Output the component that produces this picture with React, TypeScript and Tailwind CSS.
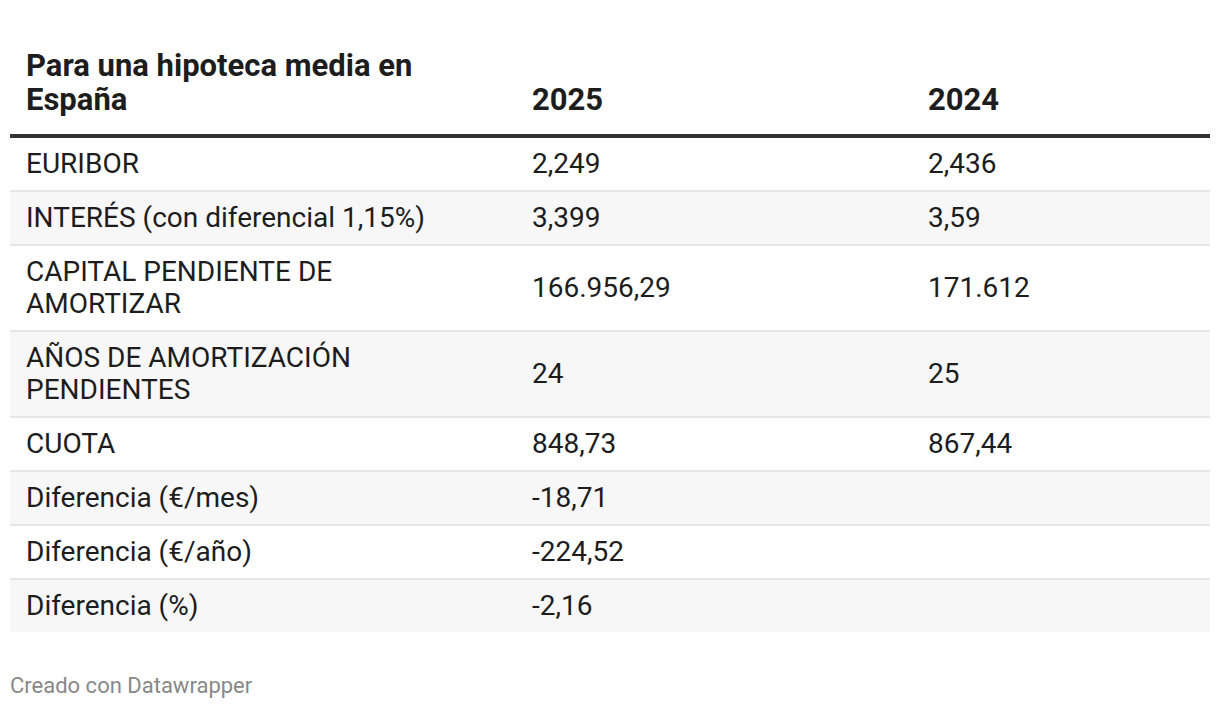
import React from "react";

const rows: [string, string, string][] = [
  ["EURIBOR", "2,249", "2,436"],
  ["INTERÉS (con diferencial 1,15%)", "3,399", "3,59"],
  ["CAPITAL PENDIENTE DE AMORTIZAR", "166.956,29", "171.612"],
  ["AÑOS DE AMORTIZACIÓN PENDIENTES", "24", "25"],
  ["CUOTA", "848,73", "867,44"],
  ["Diferencia (€/mes)", "-18,71", ""],
  ["Diferencia (€/año)", "-224,52", ""],
  ["Diferencia (%)", "-2,16", ""],
];

export default function App() {
  return (
    <div
      className="w-[1220px] h-[708px] bg-white px-[10px] pt-[49px] text-[#1d1d1d]"
      style={{ fontFamily: "Roboto, 'Liberation Sans', sans-serif" }}
    >
      <table className="w-[1200px] border-collapse table-fixed">
        <colgroup>
          <col className="w-[507px]" />
          <col className="w-[396px]" />
          <col className="w-[297px]" />
        </colgroup>
        <thead>
          <tr className="border-b-4 border-[#333333]">
            <th className="text-left align-bottom font-bold text-[31px] leading-[34px] pl-[16px] pr-[80px] pb-[17px]">
              Para una hipoteca media en España
            </th>
            <th className="text-left align-bottom font-bold text-[31px] leading-[34px] pl-[15px] pr-[16px] pb-[17px]">
              2025
            </th>
            <th className="text-left align-bottom font-bold text-[31px] leading-[34px] pl-[15px] pr-[16px] pb-[17px]">
              2024
            </th>
          </tr>
        </thead>
        <tbody>
          {rows.map((r, i) => (
            <tr
              key={i}
              className={
                (i % 2 === 1 ? "bg-[#f7f7f7] " : "bg-white ") +
                (i < rows.length - 1 ? "border-b-2 border-[#e6e6e6]" : "")
              }
            >
              <td className="text-left align-middle text-[28px] leading-[32px] pl-[16px] pr-[60px] py-[10px]">
                {r[0]}
              </td>
              <td className="text-left align-middle text-[28px] leading-[32px] pl-[15px] pr-[16px] py-[10px]">
                {r[1]}
              </td>
              <td className="text-left align-middle text-[28px] leading-[32px] pl-[15px] pr-[16px] py-[10px]">
                {r[2]}
              </td>
            </tr>
          ))}
        </tbody>
      </table>
      <div className="mt-[41px] text-[22px] leading-[26px] text-[#888888]">
        Creado con Datawrapper
      </div>
    </div>
  );
}
